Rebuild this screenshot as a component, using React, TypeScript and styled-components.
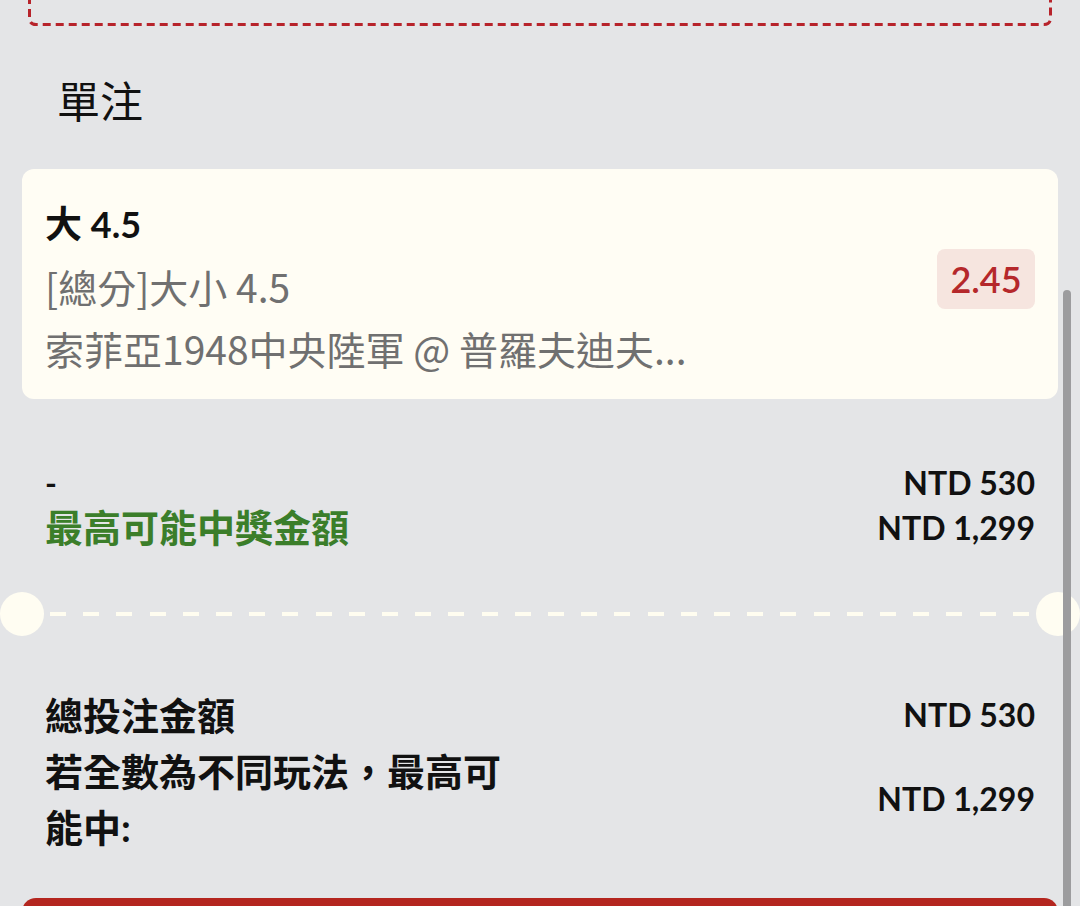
import React from "react";
import styled, { createGlobalStyle } from "styled-components";

const GlobalStyle = createGlobalStyle`
  html, body {
    margin: 0;
    padding: 0;
    background: #e4e5e7;
  }
  body {
    width: 1080px;
    height: 906px;
    overflow: hidden;
    font-family: Lato, "Noto Sans CJK TC", sans-serif;
    color: #111111;
  }
`;

const Page = styled.div`
  position: relative;
  width: 1080px;
  height: 906px;
  overflow: hidden;
  display: flex;
  flex-direction: column;
`;

const TopBox = styled.div`
  margin: 0 28px;
  height: 26px;
  flex-shrink: 0;
  svg {
    display: block;
  }
`;

const Heading = styled.h2`
  margin: 46px 0 0 57px;
  font-size: 43px;
  line-height: 60px;
  font-weight: 400;
  color: #111;
`;

const Han = styled.span<{ $size: number }>`
  font-size: ${(p) => p.$size}px;
`;

const Card = styled.div`
  margin: 37px 22px 0;
  background: #fffdf4;
  border-radius: 12px;
  padding: 24px 23px 20px;
  display: flex;
  align-items: center;
  justify-content: space-between;
`;

const Info = styled.div`
  display: flex;
  flex-direction: column;
`;

const Title = styled.div`
  font-size: 36px;
  line-height: 62px;
  font-weight: 700;
  color: #111;
  white-space: nowrap;
`;

const SubLine = styled.div`
  font-family: "Noto Sans CJK TC", "Noto Sans", sans-serif;
  font-size: 39px;
  line-height: 62px;
  font-weight: 400;
  color: #707070;
  white-space: nowrap;
`;

const Odds = styled.div`
  width: 98px;
  height: 60px;
  margin-bottom: 14px;
  border-radius: 8px;
  background: #f6e5df;
  color: #b5282b;
  font-size: 36px;
  font-weight: 600;
  display: flex;
  align-items: center;
  justify-content: center;
`;

const Summary = styled.div`
  margin: 61px 45px 0;
  display: flex;
  flex-direction: column;
`;

const Row = styled.div<{ $lh: number }>`
  display: flex;
  justify-content: space-between;
  align-items: center;
  line-height: ${(p) => p.$lh}px;
`;

const Label = styled.div<{ $green?: boolean }>`
  font-size: 38px;
  font-weight: 700;
  color: ${(p) => (p.$green ? "#3b7e2a" : "#111")};
  max-width: 475px;
`;

const Dash = styled.div`
  font-size: 32px;
  font-weight: 700;
  color: #111;
`;

const Amount = styled.div`
  font-size: 32px;
  font-weight: 700;
  color: #111;
  white-space: nowrap;
`;

const Separator = styled.div`
  margin-top: 42px;
  height: 44px;
  display: flex;
  align-items: center;
  flex-shrink: 0;
`;

const Notch = styled.div`
  width: 44px;
  height: 44px;
  border-radius: 50%;
  background: #fffdf2;
  flex-shrink: 0;
`;

const DashLine = styled.div`
  flex: 1;
  margin: 0 6px;
  height: 4px;
  background: repeating-linear-gradient(
    to right,
    #fffdf0 0 16px,
    transparent 16px 33.2px
  );
`;

const Totals = styled.div`
  margin: 51px 45px 0;
  display: flex;
  flex-direction: column;
`;

const SubmitBar = styled.div`
  margin: 43px 22px 0;
  height: 60px;
  background: #b4261f;
  border-radius: 14px 14px 0 0;
  flex-shrink: 0;
`;

const ScrollThumb = styled.div`
  position: absolute;
  right: 9px;
  top: 290px;
  bottom: -10px;
  width: 8px;
  border-radius: 4px;
  background: #9c9c9e;
`;

function DashedFrame() {
  return (
    <svg width="1024" height="26" viewBox="0 0 1024 26">
      <path
        d="M1.5 -4 V18 Q1.5 24.5 8 24.5 H1016 Q1022.5 24.5 1022.5 18 V-4"
        fill="none"
        stroke="#b7232b"
        strokeWidth="3"
        strokeDasharray="8 5"
      />
    </svg>
  );
}

export default function App() {
  return (
    <>
      <GlobalStyle />
      <Page>
        <TopBox>
          <DashedFrame />
        </TopBox>
        <Heading>單注</Heading>
        <Card>
          <Info>
            <Title>
              <Han $size={37}>大</Han> 4.5
            </Title>
            <SubLine>[總分]大小 4.5</SubLine>
            <SubLine>索菲亞1948中央陸軍 @ 普羅夫迪夫...</SubLine>
          </Info>
          <Odds>2.45</Odds>
        </Card>
        <Summary>
          <Row $lh={45}>
            <Dash>-</Dash>
            <Amount>NTD 530</Amount>
          </Row>
          <Row $lh={45}>
            <Label $green>最高可能中獎金額</Label>
            <Amount>NTD 1,299</Amount>
          </Row>
        </Summary>
        <Separator>
          <Notch />
          <DashLine />
          <Notch />
        </Separator>
        <Totals>
          <Row $lh={56}>
            <Label>總投注金額</Label>
            <Amount>NTD 530</Amount>
          </Row>
          <Row $lh={56}>
            <Label>若全數為不同玩法，最高可能中:</Label>
            <Amount>NTD 1,299</Amount>
          </Row>
        </Totals>
        <SubmitBar />
        <ScrollThumb />
      </Page>
    </>
  );
}
